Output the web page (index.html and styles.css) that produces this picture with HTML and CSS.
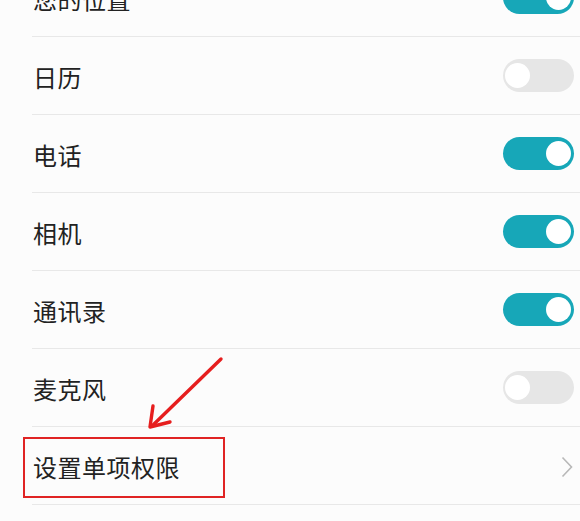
FILE: index.html
```html
<!DOCTYPE html>
<html lang="zh-CN">
<head>
    <meta charset="UTF-8">
    <meta name="viewport" content="width=device-width, initial-scale=1.0">
    <title>应用权限</title>
    <link rel="stylesheet" href="styles.css">
</head>
<body>
    <div class="perm-list">
        <div class="perm-row">
            <span class="perm-name">您的位置</span>
            <span class="switch on"><span class="knob"></span></span>
        </div>
        <div class="perm-row">
            <span class="perm-name">日历</span>
            <span class="switch"><span class="knob"></span></span>
        </div>
        <div class="perm-row">
            <span class="perm-name">电话</span>
            <span class="switch on"><span class="knob"></span></span>
        </div>
        <div class="perm-row">
            <span class="perm-name">相机</span>
            <span class="switch on"><span class="knob"></span></span>
        </div>
        <div class="perm-row">
            <span class="perm-name">通讯录</span>
            <span class="switch on"><span class="knob"></span></span>
        </div>
        <div class="perm-row">
            <span class="perm-name">麦克风</span>
            <span class="switch"><span class="knob"></span></span>
        </div>
        <div class="perm-row">
            <span class="perm-name">设置单项权限</span>
            <svg class="chevron" width="12" height="22" viewBox="0 0 12 22">
                <path d="M1.5 1.5 L10.5 11 L1.5 20.5" fill="none" stroke="#b8b8b8" stroke-width="1.6"/>
            </svg>
        </div>
    </div>

    <!-- 标注 -->
    <div class="mark-box"></div>
    <svg class="mark-arrow" width="90" height="80" viewBox="0 0 90 80">
        <path d="M76 4 L7 71" stroke="#e61e1e" stroke-width="3.4" stroke-linecap="round" fill="none"/>
        <path d="M8 51 L5 72 L25 67" stroke="#e61e1e" stroke-width="3.4" stroke-linecap="round" stroke-linejoin="round" fill="none"/>
    </svg>
</body>
</html>
```

FILE: styles.css
```css
body {
    margin: 0;
    padding: 0;
    background: #fcfcfc;
    font-family: "Noto Sans CJK SC", "Noto Sans", sans-serif;
    overflow: hidden;
}
.perm-list {
    margin-top: -41px;
    margin-left: 32px;
}
.perm-row {
    height: 78px;
    padding-top: 2px;
    padding-right: 6px;
    box-sizing: border-box;
    border-bottom: 1px solid #e8e8e8;
    display: flex;
    align-items: center;
    justify-content: space-between;
}
.perm-name {
    font-size: 24px;
    color: #222;
    margin-left: 1px;
    letter-spacing: 0.5px;
}
.switch {
    width: 71px;
    height: 33px;
    border-radius: 17px;
    background: #e6e6e6;
    position: relative;
    margin-top: -2px;
}
.switch .knob {
    position: absolute;
    top: 4px;
    left: 2px;
    width: 25px;
    height: 25px;
    border-radius: 50%;
    background: #fff;
}
.switch.on {
    background: #17a7b8;
}
.switch.on .knob {
    left: auto;
    right: 3px;
}
.chevron {
    margin-right: 1px;
}
.mark-box {
    position: absolute;
    left: 23px;
    top: 437px;
    width: 198px;
    height: 57px;
    border: 2px solid #e02424;
}
.mark-arrow {
    position: absolute;
    left: 145px;
    top: 355px;
}
```
